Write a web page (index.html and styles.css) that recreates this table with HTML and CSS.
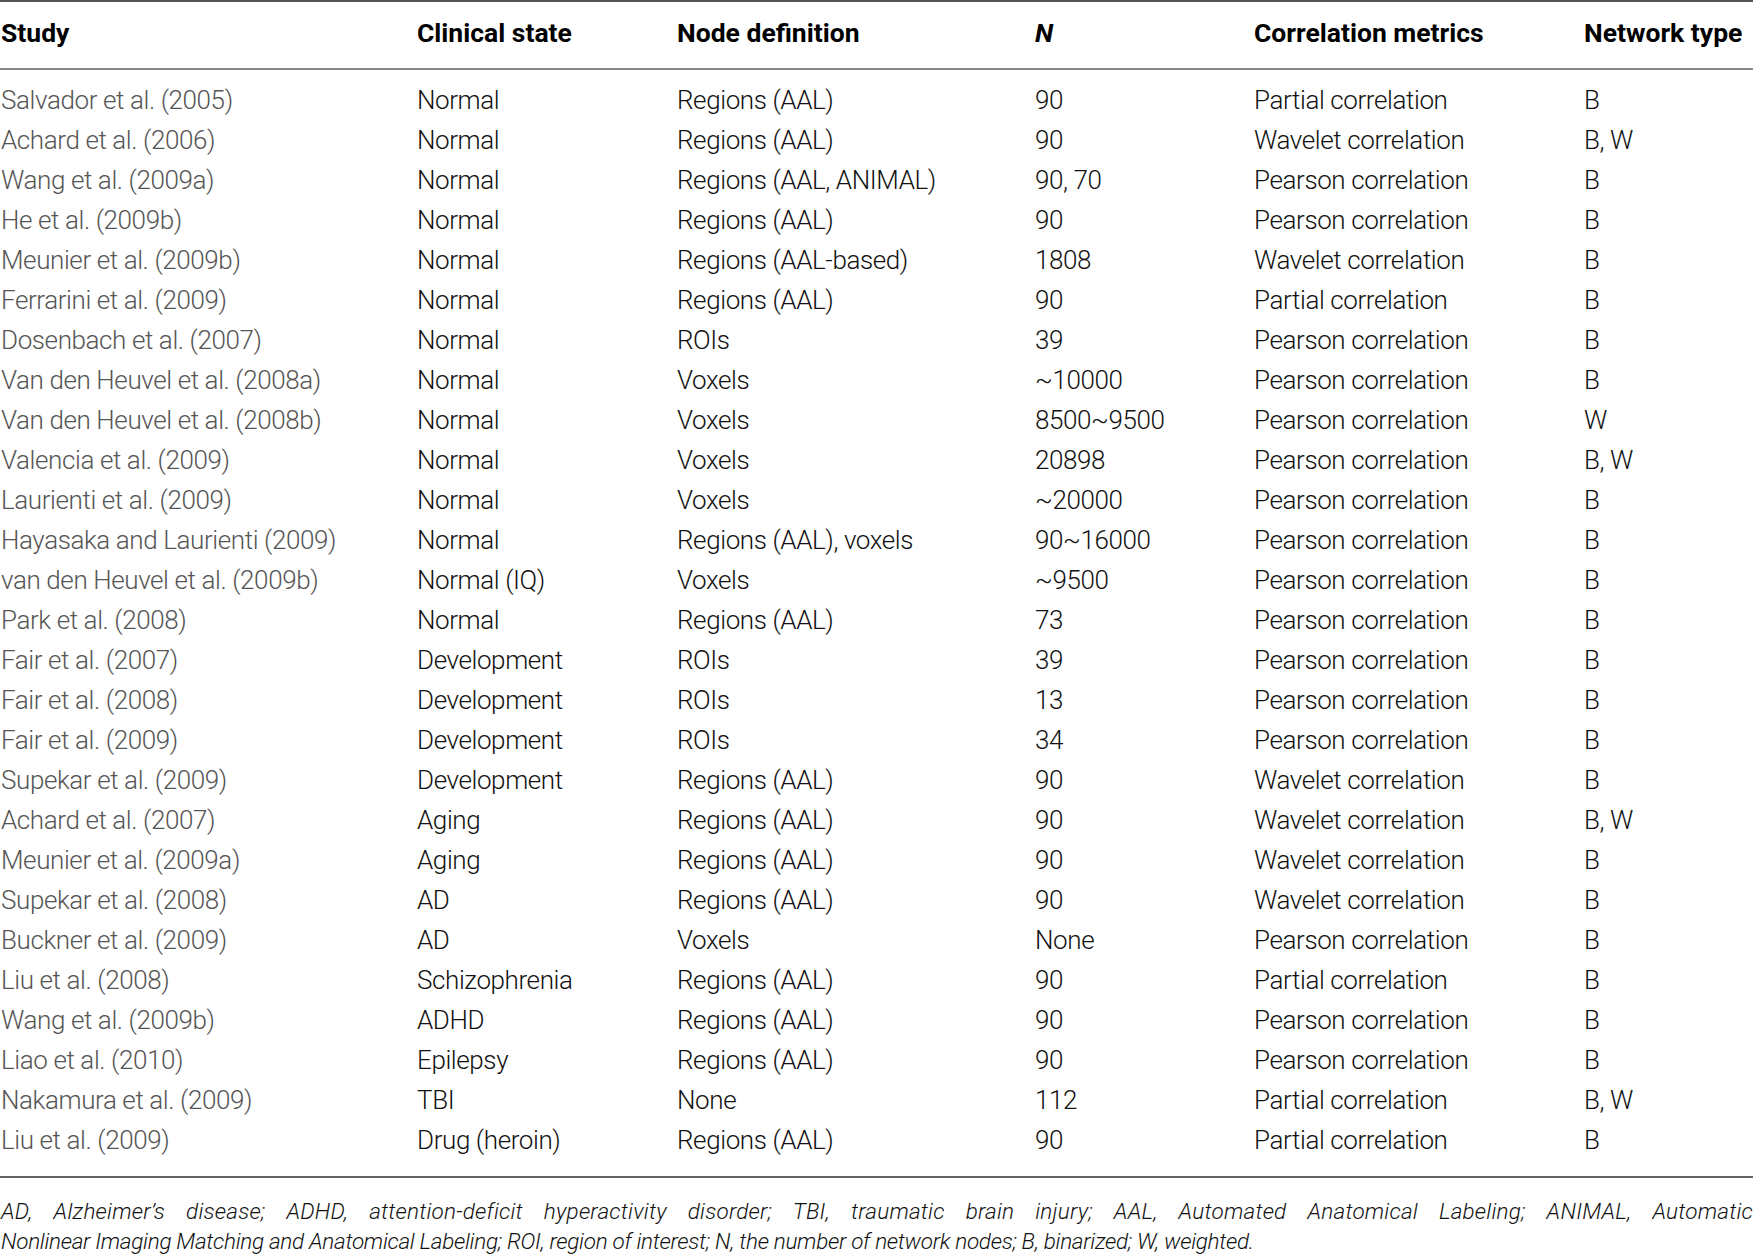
FILE: index.html
```html
<!DOCTYPE html>
<html>
<head>
<meta charset="utf-8">
<link rel="stylesheet" href="styles.css">
</head>
<body>
<div class="page">
<table class="tbl">
<colgroup>
<col class="c1"><col class="c2"><col class="c3"><col class="c4"><col class="c5"><col class="c6">
</colgroup>
<thead>
<tr><th>Study</th><th>Clinical state</th><th>Node definition</th><th><i>N</i></th><th>Correlation metrics</th><th>Network type</th></tr>
</thead>
<tbody>
<tr class="first"><td>Salvador et al. (2005)</td><td>Normal</td><td>Regions (AAL)</td><td>90</td><td>Partial correlation</td><td>B</td></tr>
<tr><td>Achard et al. (2006)</td><td>Normal</td><td>Regions (AAL)</td><td>90</td><td>Wavelet correlation</td><td>B, W</td></tr>
<tr><td>Wang et al. (2009a)</td><td>Normal</td><td>Regions (AAL, ANIMAL)</td><td>90, 70</td><td>Pearson correlation</td><td>B</td></tr>
<tr><td>He et al. (2009b)</td><td>Normal</td><td>Regions (AAL)</td><td>90</td><td>Pearson correlation</td><td>B</td></tr>
<tr><td>Meunier et al. (2009b)</td><td>Normal</td><td>Regions (AAL-based)</td><td>1808</td><td>Wavelet correlation</td><td>B</td></tr>
<tr><td>Ferrarini et al. (2009)</td><td>Normal</td><td>Regions (AAL)</td><td>90</td><td>Partial correlation</td><td>B</td></tr>
<tr><td>Dosenbach et al. (2007)</td><td>Normal</td><td>ROIs</td><td>39</td><td>Pearson correlation</td><td>B</td></tr>
<tr><td>Van den Heuvel et al. (2008a)</td><td>Normal</td><td>Voxels</td><td>~10000</td><td>Pearson correlation</td><td>B</td></tr>
<tr><td>Van den Heuvel et al. (2008b)</td><td>Normal</td><td>Voxels</td><td>8500~9500</td><td>Pearson correlation</td><td>W</td></tr>
<tr><td>Valencia et al. (2009)</td><td>Normal</td><td>Voxels</td><td>20898</td><td>Pearson correlation</td><td>B, W</td></tr>
<tr><td>Laurienti et al. (2009)</td><td>Normal</td><td>Voxels</td><td>~20000</td><td>Pearson correlation</td><td>B</td></tr>
<tr><td>Hayasaka and Laurienti (2009)</td><td>Normal</td><td>Regions (AAL), voxels</td><td>90~16000</td><td>Pearson correlation</td><td>B</td></tr>
<tr><td>van den Heuvel et al. (2009b)</td><td>Normal (IQ)</td><td>Voxels</td><td>~9500</td><td>Pearson correlation</td><td>B</td></tr>
<tr><td>Park et al. (2008)</td><td>Normal</td><td>Regions (AAL)</td><td>73</td><td>Pearson correlation</td><td>B</td></tr>
<tr><td>Fair et al. (2007)</td><td>Development</td><td>ROIs</td><td>39</td><td>Pearson correlation</td><td>B</td></tr>
<tr><td>Fair et al. (2008)</td><td>Development</td><td>ROIs</td><td>13</td><td>Pearson correlation</td><td>B</td></tr>
<tr><td>Fair et al. (2009)</td><td>Development</td><td>ROIs</td><td>34</td><td>Pearson correlation</td><td>B</td></tr>
<tr><td>Supekar et al. (2009)</td><td>Development</td><td>Regions (AAL)</td><td>90</td><td>Wavelet correlation</td><td>B</td></tr>
<tr><td>Achard et al. (2007)</td><td>Aging</td><td>Regions (AAL)</td><td>90</td><td>Wavelet correlation</td><td>B, W</td></tr>
<tr><td>Meunier et al. (2009a)</td><td>Aging</td><td>Regions (AAL)</td><td>90</td><td>Wavelet correlation</td><td>B</td></tr>
<tr><td>Supekar et al. (2008)</td><td>AD</td><td>Regions (AAL)</td><td>90</td><td>Wavelet correlation</td><td>B</td></tr>
<tr><td>Buckner et al. (2009)</td><td>AD</td><td>Voxels</td><td>None</td><td>Pearson correlation</td><td>B</td></tr>
<tr><td>Liu et al. (2008)</td><td>Schizophrenia</td><td>Regions (AAL)</td><td>90</td><td>Partial correlation</td><td>B</td></tr>
<tr><td>Wang et al. (2009b)</td><td>ADHD</td><td>Regions (AAL)</td><td>90</td><td>Pearson correlation</td><td>B</td></tr>
<tr><td>Liao et al. (2010)</td><td>Epilepsy</td><td>Regions (AAL)</td><td>90</td><td>Pearson correlation</td><td>B</td></tr>
<tr><td>Nakamura et al. (2009)</td><td>TBI</td><td>None</td><td>112</td><td>Partial correlation</td><td>B, W</td></tr>
<tr class="last"><td>Liu et al. (2009)</td><td>Drug (heroin)</td><td>Regions (AAL)</td><td>90</td><td>Partial correlation</td><td>B</td></tr>
</tbody>
</table>
<p class="note"><span class="line1">AD, Alzheimer’s disease; ADHD, attention-deficit hyperactivity disorder; TBI, traumatic brain injury; AAL, Automated Anatomical Labeling; ANIMAL, Automatic</span><span class="line2">Nonlinear Imaging Matching and Anatomical Labeling; ROI, region of interest; N, the number of network nodes; B, binarized; W, weighted.</span></p>
</div>
</body>
</html>
```

FILE: styles.css
```css
html, body {
  margin: 0;
  padding: 0;
  background: #fff;
}
.page {
  width: 1753px;
  font-family: "Roboto", "Liberation Sans", sans-serif;
  color: #111;
}
.tbl {
  width: 1753px;
  border-collapse: collapse;
  table-layout: fixed;
  border-top: 2px solid #555;
  border-bottom: 2px solid #666;
}
.c1 { width: 416px; }
.c2 { width: 260px; }
.c3 { width: 358px; }
.c4 { width: 219px; }
.c5 { width: 330px; }
.c6 { width: 170px; }
th, td {
  text-align: left;
  padding: 0 0 0 1px;
  white-space: nowrap;
}
th {
  font-size: 26.5px;
  letter-spacing: 0;
  font-weight: 700;
  height: 60px;
  padding-bottom: 6px;
  border-bottom: 2px solid #888;
  color: #000;
}
td {
  font-size: 26px;
  letter-spacing: -0.4px;
  font-weight: 300;
  height: 40px;
  color: #111;
}
td:first-child {
  color: #555;
}
tr.first td {
  padding-top: 10px;
}
tr.last td {
  padding-bottom: 16px;
}
.note {
  margin: 18px 0 0 1px;
  font-size: 22.5px;
  font-style: italic;
  font-weight: 300;
  line-height: 30px;
  color: #111;
  letter-spacing: -0.3px;
}
.line1 {
  display: block;
  text-align: justify;
  text-align-last: justify;
  letter-spacing: 0.2px;
}
.line2 {
  display: block;
  white-space: nowrap;
}
```
